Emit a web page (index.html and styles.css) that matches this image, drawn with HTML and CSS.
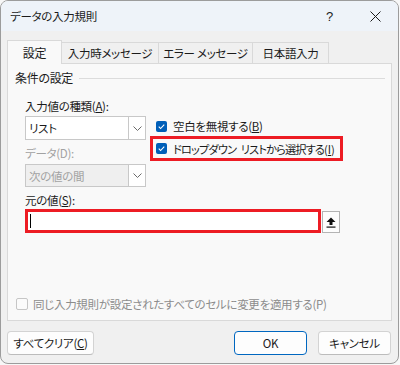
FILE: index.html
```html
<!DOCTYPE html>
<html lang="ja">
<head>
<meta charset="utf-8">
<link rel="stylesheet" href="styles.css">
</head>
<body>
<div class="dialog">
  <div class="titlebar">
    <span class="title">データの入力規則</span>
    <span class="tb-btn help">?</span>
    <span class="tb-btn close">
      <svg width="11" height="11" viewBox="0 0 11 11"><path d="M0.5 0.5 L10.5 10.5 M10.5 0.5 L0.5 10.5" stroke="#1b1b1b" stroke-width="1"/></svg>
    </span>
  </div>
  <div class="content">
    <div class="tabs">
      <div class="tab active">設定</div>
      <div class="tab t2">入力時メッセージ</div>
      <div class="tab t3">エラー メッセージ</div>
      <div class="tab t4">日本語入力</div>
    </div>
    <div class="panel">
      <div class="group-head"><span>条件の設定</span></div>
      <div class="inner">
        <div class="label l1">入力値の種類(<u>A</u>):</div>
        <div class="mainrow">
          <div class="leftcol">
            <div class="combo">
              <span class="combo-text">リスト</span>
              <span class="combo-btn"><svg width="9" height="5" viewBox="0 0 9 5"><path d="M0.5 0.5 L4.5 4.5 L8.5 0.5" fill="none" stroke="#6a6a6a" stroke-width="1"/></svg></span>
            </div>
            <div class="label disabled l2">データ(D):</div>
            <div class="combo off">
              <span class="combo-text">次の値の間</span>
              <span class="combo-btn"><svg width="9" height="5" viewBox="0 0 9 5"><path d="M0.5 0.5 L4.5 4.5 L8.5 0.5" fill="none" stroke="#6a6a6a" stroke-width="1"/></svg></span>
            </div>
          </div>
          <div class="rightcol">
            <div class="check-row r1">
              <span class="cb on"><svg width="11" height="11" viewBox="0 0 12 12"><path d="M3 6.2 L5 8.2 L9 4" fill="none" stroke="#fff" stroke-width="1.2"/></svg></span>
              <span>空白を無視する(<u>B</u>)</span>
            </div>
            <div class="check-row redbox">
              <span class="cb on"><svg width="11" height="11" viewBox="0 0 12 12"><path d="M3 6.2 L5 8.2 L9 4" fill="none" stroke="#fff" stroke-width="1.2"/></svg></span>
              <span class="tight">ドロップダウン リストから選択する<span class="mn">(<u>I</u>)</span></span>
            </div>
          </div>
        </div>
        <div class="label l3">元の値(<u>S</u>):</div>
        <div class="source-row">
          <div class="source"><span class="caret"></span></div>
          <span class="pick"><svg width="10" height="11" viewBox="0 0 10 11"><path d="M5 0.5 L9.5 5 L6.5 5 L6.5 8 L3.5 8 L3.5 5 L0.5 5 Z" fill="#111"/><rect x="0.5" y="9.5" width="9" height="1.2" fill="#111"/></svg></span>
        </div>
      </div>
      <div class="check-row bottom disabled">
        <span class="cb off"></span>
        <span>同じ入力規則が設定されたすべてのセルに変更を適用する(P)</span>
      </div>
    </div>
    <div class="buttons">
      <span class="btn clear">すべてクリア(<u>C</u>)</span>
      <div class="btn-group">
        <span class="btn ok">OK</span>
        <span class="btn">キャンセル</span>
      </div>
    </div>
  </div>
</div>
</body>
</html>
```
FILE: styles.css
```css
* { box-sizing: border-box; }
html, body { margin: 0; padding: 0; }
body {
  width: 400px;
  height: 365px;
  background: #f7f7f7;
  font-family: "Noto Sans CJK JP", "Noto Sans", sans-serif;
  font-size: 11.5px;
  letter-spacing: -0.3px;
  font-feature-settings: "palt";
  color: #1b1b1b;
  overflow: hidden;
  white-space: nowrap;
}
u { text-decoration-thickness: 1px; text-underline-offset: 1px; }
.dialog {
  width: 399px;
  height: 364px;
  border: 1px solid #9c9c9c;
  border-radius: 8px;
  overflow: hidden;
  background: #f0f0f0;
  display: flex;
  flex-direction: column;
}
.titlebar {
  height: 30px;
  flex: none;
  background: #eef3f9;
  display: flex;
  align-items: center;
  padding-left: 9px;
}
.title { flex: 1; line-height: 16px; }
.tb-btn {
  width: 45px;
  height: 30px;
  display: flex;
  align-items: center;
  justify-content: center;
}
.help { font-size: 13px; font-family: "Liberation Sans", sans-serif; color: #222; }
.close { width: 46px; }
.content { padding: 8px 6px 0 6px; display: flex; flex-direction: column; }
.tabs { display: flex; align-items: flex-end; height: 24px; }
.tab {
  height: 21px;
  border: 1px solid #d9d9d9;
  border-left: none;
  border-bottom: none;
  background: #f0f0f0;
  display: flex;
  align-items: center;
  justify-content: center;
  line-height: 16px;
}
.tab.active {
  height: 24px;
  width: 55px;
  border-left: 1px solid #d9d9d9;
  background: #f9f9f9;
  position: relative;
  z-index: 1;
  margin-bottom: -1px;
  font-size: 12px;
}
.t2 { width: 97px; }
.t3 { width: 94px; }
.t4 { width: 76px; }
.panel {
  width: 385px;
  height: 258px;
  border: 1px solid #d9d9d9;
  background: #f9f9f9;
  display: flex;
  flex-direction: column;
  padding-top: 6px;
}
.group-head {
  display: flex;
  align-items: center;
  padding-left: 7px;
  padding-right: 6px;
  line-height: 16px;
  font-size: 12px;
}
.group-head::after {
  content: "";
  flex: 1;
  height: 1px;
  background: #dcdcdc;
  margin-left: 6px;
}
.inner { padding-left: 17px; }
.label { line-height: 16px; }
.l1 { margin-top: 12px; }
.disabled { color: #a2a2a2; }
.mainrow { display: flex; margin-top: 2px; }
.leftcol { width: 121px; display: flex; flex-direction: column; }
.combo {
  height: 24px;
  border: 1px solid #c8c8c8;
  background: #fff;
  display: flex;
  align-items: center;
}
.combo.off { background: #efefef; color: #a2a2a2; height: 23px; margin-top: 3px; }
.combo-text { flex: 1; padding-left: 3px; line-height: 16px; }
.combo-btn {
  width: 17px;
  height: 100%;
  border-left: 1px solid #c8c8c8;
  background: #fff;
  display: flex;
  align-items: center;
  justify-content: center;
}
.l2 { margin-top: 5px; }
.rightcol { margin-left: 4px; display: flex; flex-direction: column; }
.check-row { display: flex; align-items: center; gap: 6px; line-height: 16px; }
.r1 { height: 20px; padding-left: 6px; }
.redbox {
  height: 25px;
  width: 193px;
  border: 3px solid #ed1c24;
  padding-left: 3px;
}
.tight { font-size: 11.2px; letter-spacing: -0.85px; word-spacing: 3px; }
.mn { letter-spacing: 0; }
.cb {
  width: 11px;
  height: 11px;
  border-radius: 2px;
  flex: none;
  display: flex;
  align-items: center;
  justify-content: center;
}
.cb.on { background: #005fb8; }
.cb.off { background: #fbfbfb; border: 1px solid #c6c6c6; width: 12px; height: 12px; }
.l3 { margin-top: 5px; }
.source-row { display: flex; align-items: flex-start; margin-top: 1px; }
.source {
  width: 296px;
  height: 24px;
  border: 3px solid #ed1c24;
  background: #fff;
  display: flex;
  align-items: center;
  padding-left: 2px;
}
.caret { width: 1px; height: 14px; background: #000; }
.pick {
  width: 18px;
  height: 22px;
  margin-top: 2px;
  margin-left: 1px;
  border: 1px solid #b4b4b4;
  background: #fdfdfd;
  display: flex;
  align-items: center;
  justify-content: center;
}
.bottom { margin-top: auto; margin-bottom: 8px; padding-left: 8px; gap: 5px; color: #8c8c8c; }
.buttons { display: flex; justify-content: space-between; margin-top: 10px; padding-right: 1px; }
.btn-group { display: flex; gap: 11px; }
.btn {
  height: 24px;
  width: 73px;
  border: 1px solid #d3d3d3;
  border-bottom-color: #bcbcbc;
  border-radius: 4px;
  background: #fdfdfd;
  display: flex;
  align-items: center;
  justify-content: center;
  line-height: 16px;
}
.btn.clear { width: 87px; }
.btn.ok { border: 1px solid #0067c0; }
```
